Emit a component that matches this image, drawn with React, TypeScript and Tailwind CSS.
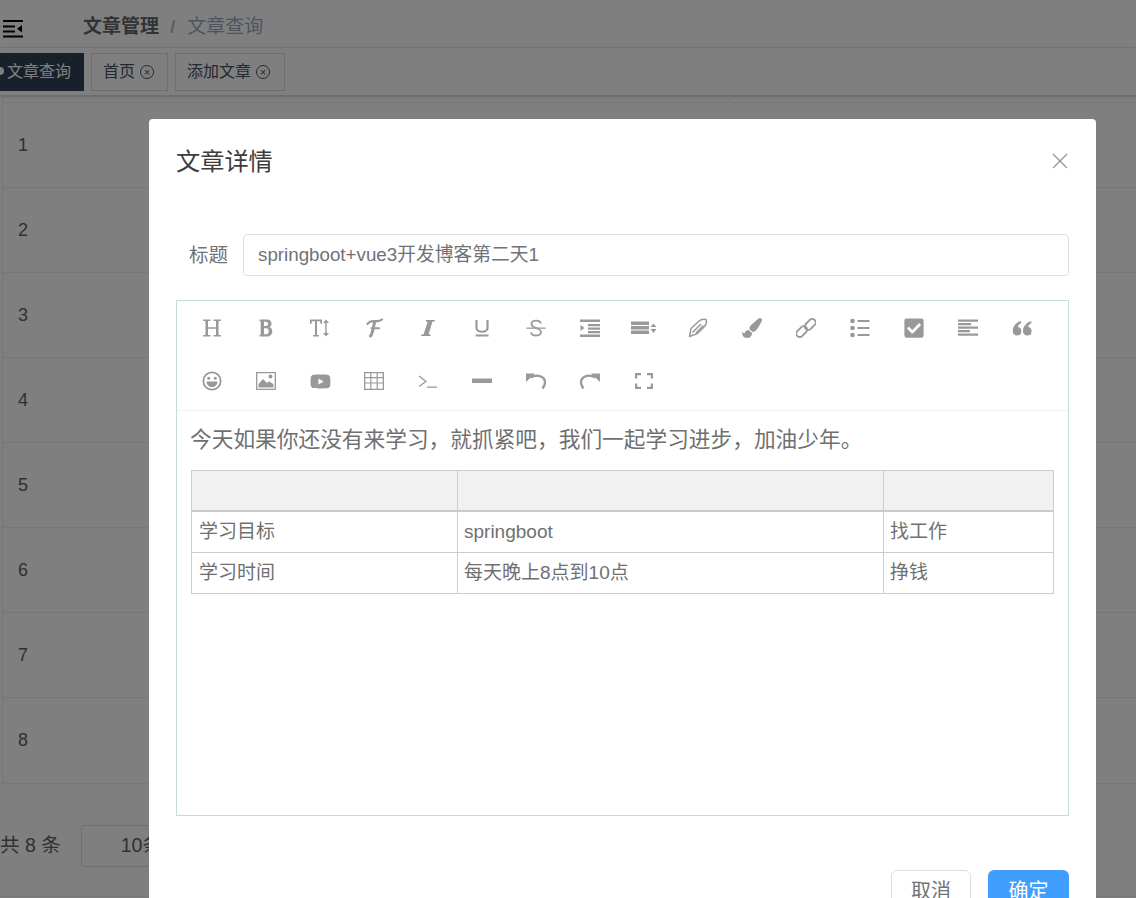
import { FaPaintBrush, FaCheckSquare, FaYoutube } from "react-icons/fa";

const font = { fontFamily: '"Liberation Sans", "Noto Sans CJK SC", sans-serif' };

function Ico({ children, w = 20 }: { children: React.ReactNode; w?: number }) {
    return (
        <svg width={w} height="20" viewBox={`0 0 ${w} 20`} fill="#999" stroke="none">
            {children}
        </svg>
    );
}

const quote = "M5 17.500a4.300 4.300 0 0 1-4.300-4.300C.7 8.500 3.800 4.500 9 3v2.200C7 6.200 6 7.600 5.900 9A4.300 4.300 0 0 1 5 17.500z";

const icons = [
    <Ico><path d="M1 1.500h7.500V3H6v6.200h8V3h-2.500V1.500H19V3h-2.500v14H19v1.500h-7.500V17H14v-6.300H6V17h2.500v1.500H1V17h2.500V3H1z" /></Ico>,
    <Ico><path fillRule="evenodd" d="M3.500 1.500h7.500c3 0 4.500 1.700 4.500 4 0 1.700-.8 3-2.400 3.600 2 .5 3.200 2 3.200 4.100 0 3.200-2.300 5.300-5.300 5.300H3.500V17l1.200-.4V3.400L3.500 3zM8 3.700v4.300h2c1.300 0 2-.8 2-2.200s-.7-2.100-2-2.100zM8 10.200v6h2.400c1.500 0 2.300-1.100 2.300-3 0-2-.9-3-2.500-3z" /></Ico>,
    <Ico><path d="M0 1.500h12v4.500h-1.200L10 3.200H7v13.600l2 .4v1.300H3v-1.300l2-.4V3.200H2L1.200 6H0z" /><path d="M16 1.500l3 3.500h-2.300v10H19l-3 3.500-3-3.500h2.300V5H13z" /></Ico>,
    <Ico>
        <g fill="none" stroke="#999" strokeLinecap="round">
            <path d="M3.500 6C5.500 2.500 9.500 3.200 12.500 3.200S16.500 2.700 18 1.500" strokeWidth="2.200" />
            <path d="M11 3.500C9 8 9.500 14 6.500 18" strokeWidth="3" />
            <path d="M7.500 10.300h7.500" strokeWidth="2" />
        </g>
    </Ico>,
    <Ico><path d="M8 2h9l-.3 1.300-2.400.7L10.700 16l2 .7-.3 1.300H3l.3-1.300 2.400-.7L9.600 4l-2-.7z" /></Ico>,
    <Ico><path d="M4.500 2v8c0 5 11 5 11 0V2" fill="none" stroke="#999" strokeWidth="2.200" /><path d="M3.500 16.500h13v2h-13z" /></Ico>,
    <Ico><path d="M15 5.500C14 3 11.500 2.500 9.500 2.700 7 3 5.500 4.300 5.500 6c0 4.500 9.500 3.500 9.500 8 0 2-2 3.500-5 3.500-2.500 0-4.500-1-5.200-3" fill="none" stroke="#999" strokeWidth="1.800" /><path d="M.5 9.500h19v1.300H.5z" /></Ico>,
    <Ico><path d="M0 1.500h20v2.500H0zM8 6h12v2.200H8zM8 9.500h12v2.200H8zM8 13h12v2.200H8zM0 16.500h20v2.500H0zM.5 7l4 3-4 3z" /></Ico>,
    <Ico w={26}><path d="M0 3.500h18V7H0zM0 8h18v3.500H0zM0 12.500h18V16H0zM22.500 5.500l3 3.500h-6zM22.500 15l-3-4h6z" /></Ico>,
    <Ico>
        <g fill="none" stroke="#999" strokeWidth="1.500" strokeLinejoin="round">
            <path d="M1.500 18.500L3 10.500 11 3C13 1.300 16 1 18 1.500 19 4 18 7 16 9L9.500 15.500z" />
            <path d="M4.500 14.500L13 6M8 15L15.500 7.500" />
        </g>
    </Ico>,
    <FaPaintBrush size={20} color="#999" />,
    <Ico>
        <g fill="none" stroke="#999" strokeWidth="1.800">
            <rect x="-0.500" y="10.200" width="12.500" height="6.800" rx="3.400" transform="rotate(-45 5.750 13.600)" />
            <rect x="8" y="3" width="12.500" height="6.800" rx="3.400" transform="rotate(-45 14.250 6.400)" />
        </g>
    </Ico>,
    <Ico><circle cx="2.500" cy="3" r="2.300" /><circle cx="2.500" cy="10" r="2.300" /><circle cx="2.500" cy="17" r="2.300" /><path d="M7.500 2h12v2h-12zM7.500 9h12v2h-12zM7.500 16h12v2h-12z" /></Ico>,
    <FaCheckSquare size={22} color="#999" />,
    <Ico><path d="M0 1.500h20v2.300H0zM0 5h13v2.300H0zM0 8.500h20v2.300H0zM0 12h12v2.300H0zM0 15.500h20v2.300H0z" /></Ico>,
    <Ico><path d={quote} /><path d={quote} transform="translate(10.300 0)" /></Ico>,
];

const icons2 = [
    <Ico><circle cx="10" cy="10" r="8.700" fill="none" stroke="#999" strokeWidth="1.800" /><circle cx="6.700" cy="7.300" r="1.500" /><circle cx="13.300" cy="7.300" r="1.500" /><path d="M4.500 10.500h11c0 3.500-2.500 5.500-5.500 5.500s-5.500-2-5.500-5.500z" /></Ico>,
    <Ico><path fillRule="evenodd" d="M0 1h20v18H0zM1.300 2.300v15.400h17.400V2.300z" /><path d="M2.500 16.500v-3.500l4.500-5 4 4 2-1.700 4.500 3v3.200z" /><circle cx="14.500" cy="5.500" r="2" /></Ico>,
    <FaYoutube size={21} color="#999" />,
    <Ico><path fillRule="evenodd" d="M0 1h20v18H0zM1.300 2.300V6h4.900V2.300zM7.400 2.300V6h5.200V2.300zM13.800 2.300V6h4.900V2.300zM1.300 7.200v4.200h4.900V7.200zM7.400 7.200v4.200h5.200V7.200zM13.800 7.200v4.200h4.900V7.200zM1.300 12.600v5.100h4.900v-5.100zM7.400 12.600v5.100h5.200v-5.100zM13.800 12.600v5.100h4.900v-5.100z" /></Ico>,
    <Ico><path d="M1 5l7 5.500-7 5" fill="none" stroke="#999" strokeWidth="1.300" /><path d="M9 15.500h10v1.300H9z" /></Ico>,
    <Ico><path d="M0 7.500h20v4.500H0z" /></Ico>,
    <Ico><path d="M5 6.500C10 3 19 4.500 19 11.500c0 2-1 4-2.500 6" fill="none" stroke="#999" strokeWidth="2.300" /><path d="M0 2.500h9L0 11z" /></Ico>,
    <Ico><path d="M15 6.500C10 3 1 4.500 1 11.500c0 2 1 4 2.500 6" fill="none" stroke="#999" strokeWidth="2.300" /><path d="M20 2.500h-9l9 8.500z" /></Ico>,
    <Ico><path d="M1 2h6v2.200H3.200v3.300H1zM13 2h6v5.500h-2.200V4.200H13zM1 12.500h2.200v3.300H7V18H1zM16.800 12.500H19V18h-6v-2.200h3.800z" /></Ico>,
];

const rows = [1, 2, 3, 4, 5, 6, 7, 8];

export default function App() {
    return (
        <div style={font} className="relative w-[1136px] h-[898px] overflow-hidden bg-white">
            <div className="h-[48px] flex items-center pt-[8px] border-b border-[#eee]">
                <svg width="22" height="18" viewBox="0 0 22 18" className="ml-[2px] mr-[59px] mt-[3px]" fill="#000">
                    <path d="M1 0h20v2H1zM1 5.500h12v2H1zM1 10.500h12v2H1zM1 15.500h20v2H1z" />
                    <path d="M20 5v7.500L15 8.750z" />
                </svg>
                <span className="text-[19px] font-bold text-[#666]">文章管理</span>
                <span className="text-[19px] font-bold text-[#bbb] ml-[11px] mr-[12px]">/</span>
                <span className="text-[19px] text-[#97a8be]">文章查询</span>
            </div>
            <div className="h-[48px] flex items-center pt-[1px] gap-[7px] border-b border-[#ddd] shadow-[0_1px_3px_rgba(0,0,0,0.2)]">
                <div className="relative w-[84px] h-[38px] bg-[#304156] text-white text-[16px] flex items-center justify-end pr-[13px]">
                    <span className="absolute left-[-4px] top-[14px] w-[8px] h-[8px] rounded-full bg-white" />
                    文章查询
                </div>
                <div className="w-[77px] h-[38px] border border-[#d8dce5] text-[16px] text-[#495060] flex items-center pl-[11px] gap-[5px]">
                    首页
                    <span className="w-[14px] h-[14px] rounded-full border border-[#495060] text-[11px] leading-[11px] flex items-center justify-center">×</span>
                </div>
                <div className="w-[110px] h-[38px] border border-[#d8dce5] text-[16px] text-[#495060] flex items-center pl-[11px] gap-[5px]">
                    添加文章
                    <span className="w-[14px] h-[14px] rounded-full border border-[#495060] text-[11px] leading-[11px] flex items-center justify-center">×</span>
                </div>
            </div>
            <div className="ml-[2px] border-l border-b border-[#ebeef5]">
                <div className="grid grid-cols-[240px_243px_243px_1fr] h-[7px] border-b border-[#ebeef5]">
                    <div className="border-r border-[#ebeef5]" />
                    <div className="border-r border-[#ebeef5]" />
                    <div className="border-r border-[#ebeef5]" />
                    <div />
                </div>
                {rows.map((n) => (
                    <div key={n} className="h-[85px] flex items-center border-b border-[#ebeef5] last:border-b-0 pl-[15px] text-[18px] text-[#606266]">
                        {n}
                    </div>
                ))}
            </div>
            <div className="flex items-center mt-[41px] text-[19.500px] text-[#606266]">
                <span>共 8 条</span>
                <div className="ml-[20px] w-[160px] h-[42px] border border-[#dcdfe6] rounded-[4px] flex items-center pl-[39px]">10条/页</div>
            </div>
            <div className="mt-[29px] border-t border-[#eee]" />

            <div className="absolute inset-0 bg-black/50" />

            <div className="absolute left-[149px] top-[119px] w-[947px] h-[860px] bg-white rounded-[4px] px-[27px]">
                <div className="flex items-center justify-between h-[86px] w-[893px]">
                    <span className="text-[24.200px] text-[#3d3d3d]">文章详情</span>
                    <svg width="16" height="16" viewBox="0 0 16 16" className="mr-[1px] -mt-[2px]" stroke="#909399" strokeWidth="1.300">
                        <path d="M1 1l14 14M15 1L1 15" />
                    </svg>
                </div>
                <div className="flex items-center mt-[29px] w-[893px]">
                    <span className="w-[67px] pl-[13px] pt-[1px] text-[19.500px] text-[#707276]">标题</span>
                    <div className="flex-1 h-[42px] border border-[#dcdfe6] rounded-[4px] flex items-center pl-[14px] text-[18.750px] text-[#707276]">
                        springboot+vue3开发博客第二天1
                    </div>
                </div>
                <div className="mt-[24px] w-[893px] h-[516px] border border-[#c9d8db]">
                    <div className="pl-[8px] pb-[2px] border-b border-[#f1f1f1]">
                        <div className="flex h-[53px]">
                            {icons.map((ic, i) => (
                                <div key={i} className="w-[54px] flex items-center justify-center">{ic}</div>
                            ))}
                        </div>
                        <div className="flex h-[54px]">
                            {icons2.map((ic, i) => (
                                <div key={i} className="w-[54px] flex items-center justify-center">{ic}</div>
                            ))}
                        </div>
                    </div>
                    <div className="pl-[13px] text-[#707070]">
                        <p className="text-[21.700px] leading-[30px] mt-[14px] whitespace-nowrap">今天如果你还没有来学习，就抓紧吧，我们一起学习进步，加油少年。</p>
                        <table className="mt-[15px] ml-[1px] w-[863px] border-collapse text-[19px] table-fixed">
                            <tbody>
                                <tr className="h-[40px] bg-[#f1f1f1] border-b-2 border-[#ccc]">
                                    <td className="w-[266px] border border-[#ccc]" />
                                    <td className="w-[426px] border border-[#ccc]" />
                                    <td className="border border-[#ccc]" />
                                </tr>
                                <tr className="h-[42px]">
                                    <td className="border border-[#ccc] px-[7px]">学习目标</td>
                                    <td className="border border-[#ccc] px-[6px]">springboot</td>
                                    <td className="border border-[#ccc] px-[6px]">找工作</td>
                                </tr>
                                <tr className="h-[41px]">
                                    <td className="border border-[#ccc] px-[7px]">学习时间</td>
                                    <td className="border border-[#ccc] px-[6px]">每天晚上8点到10点</td>
                                    <td className="border border-[#ccc] px-[6px]">挣钱</td>
                                </tr>
                            </tbody>
                        </table>
                    </div>
                </div>
                <div className="flex justify-end gap-[17px] mt-[54px] w-[893px] text-[20px]">
                    <button className="w-[80px] h-[42px] border border-[#dcdfe6] rounded-[6px] text-[#707276] bg-white">取消</button>
                    <button className="w-[81px] h-[42px] rounded-[6px] text-white bg-[#409eff]">确定</button>
                </div>
            </div>
        </div>
    );
}
